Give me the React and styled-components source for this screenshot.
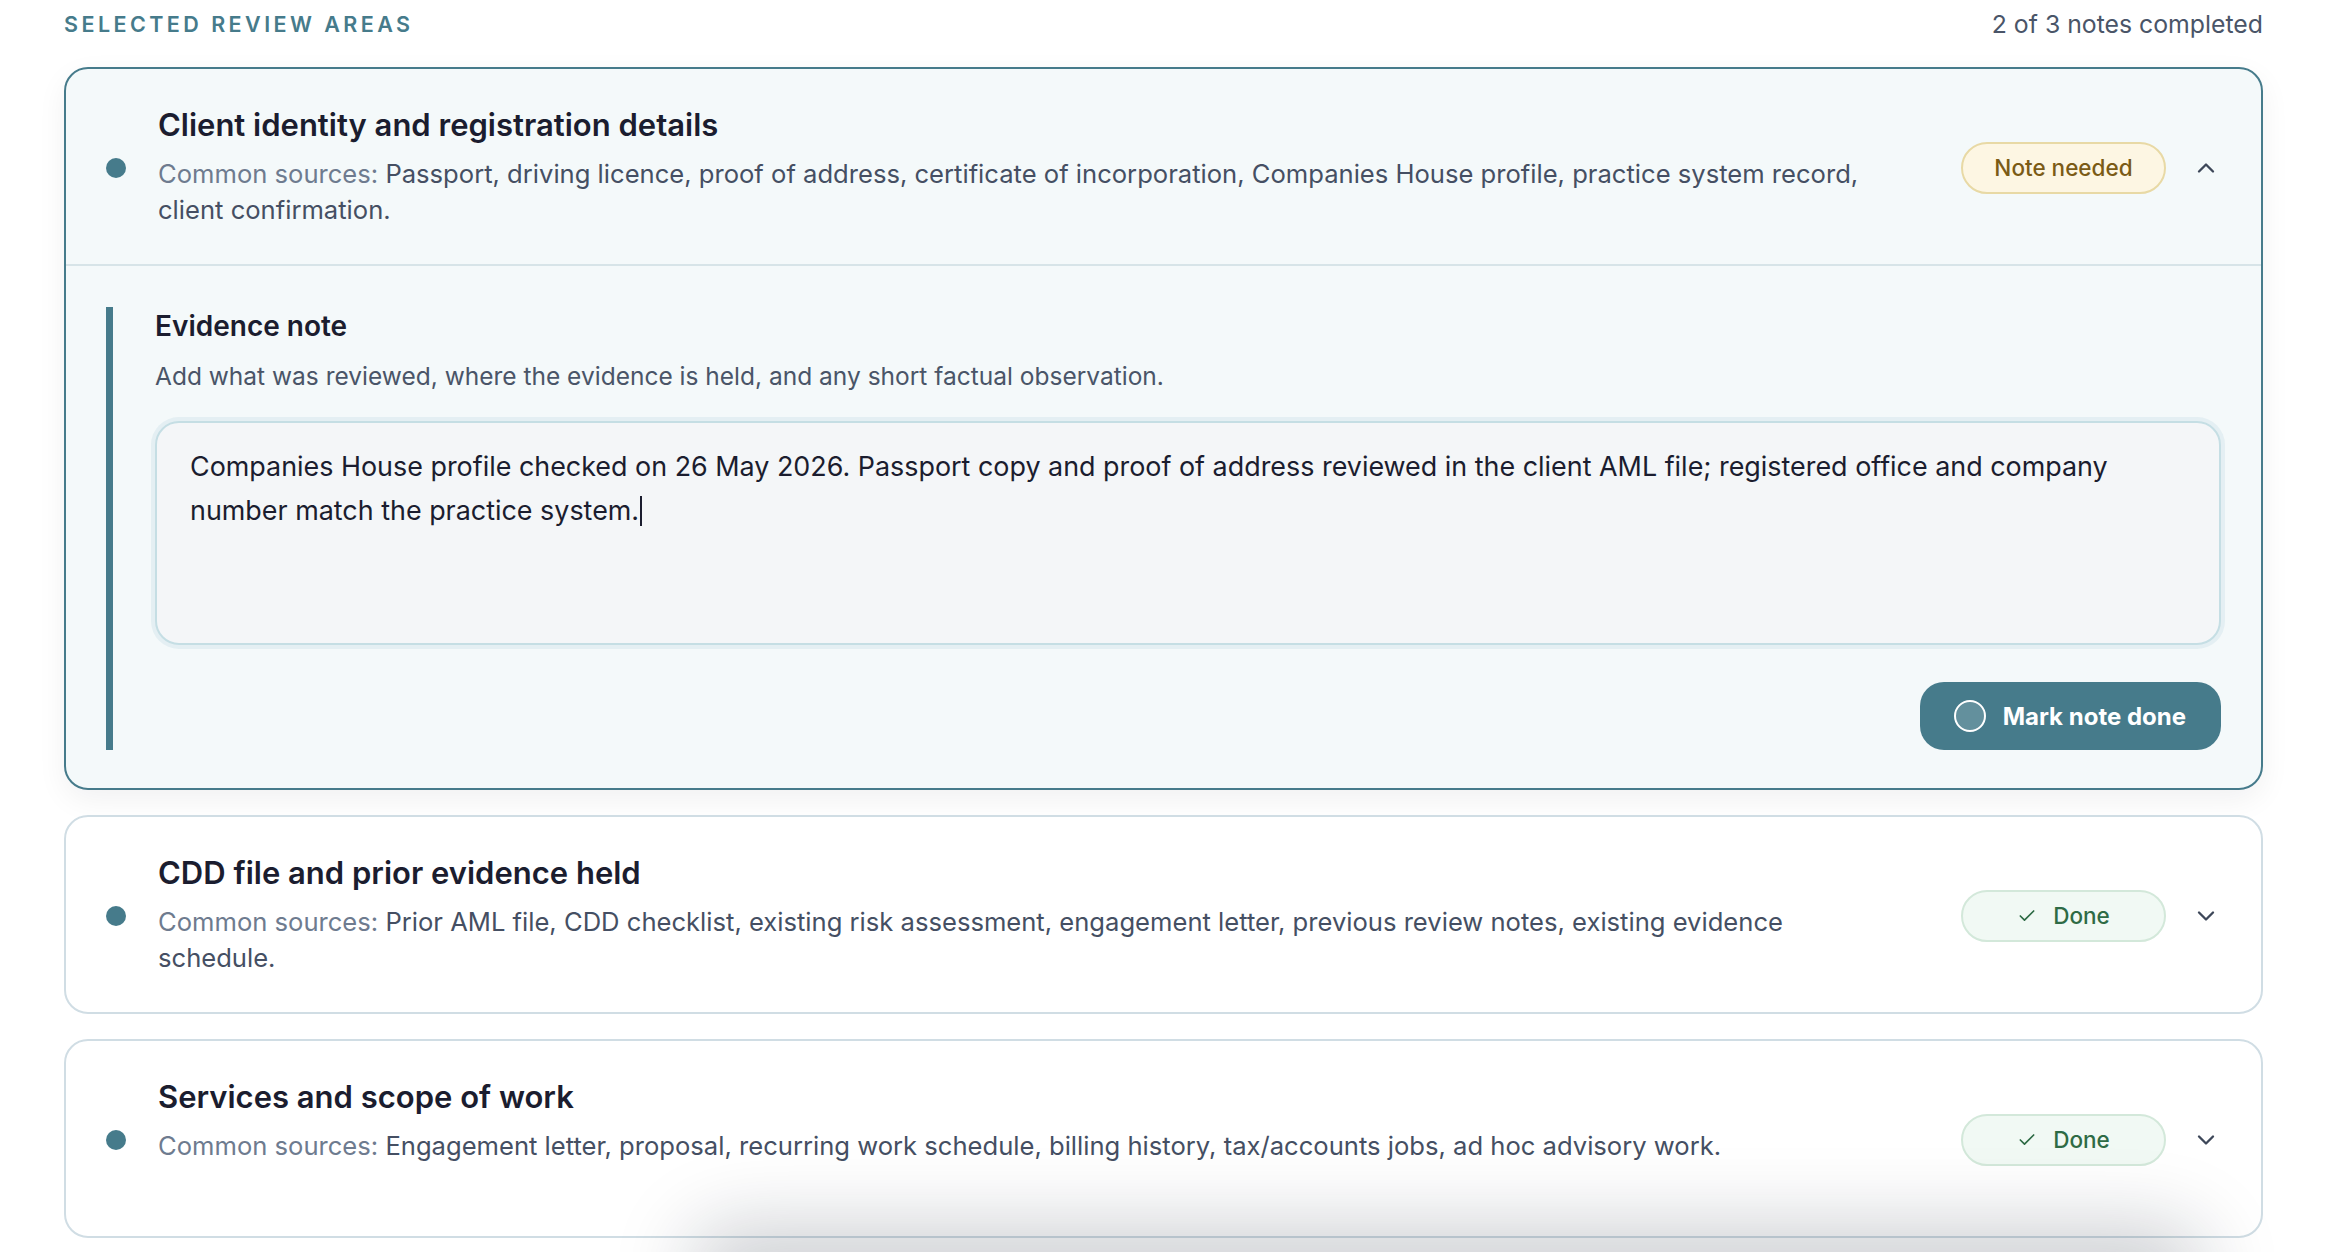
import styled, { createGlobalStyle } from 'styled-components'
import { ChevronDown, ChevronUp, Check } from 'lucide-react'

const TEAL = '#467b8b'

const GlobalStyle = createGlobalStyle`
    body {
        margin: 0;
        background: #fff;
        font-family: Inter, "Noto Sans", sans-serif;
        color: #1b1d2f;
    }
    * { box-sizing: border-box; }
`

const Page = styled.div`
    padding: 8px 71px 0 64px;
`
const Header = styled.div`
    display: flex;
    align-items: center;
    justify-content: space-between;
    height: 32px;
    margin-bottom: 27px;
`
const SectionLabel = styled.h2`
    margin: 0;
    font-size: 21.5px;
    font-weight: 600;
    letter-spacing: 0.16em;
    text-transform: uppercase;
    color: ${TEAL};
`
const Progress = styled.div`
    font-size: 24.8px;
    color: #4a5568;
`
const List = styled.div`
    display: flex;
    flex-direction: column;
    gap: 25px;
`
const Card = styled.section`
    border: 2px solid ${p => (p.$open ? TEAL : '#d0dde4')};
    border-radius: 24px;
    background: ${p => (p.$open ? '#f4f9fa' : '#fff')};
    box-shadow: ${p => (p.$open ? '0 10px 30px rgba(15, 23, 42, 0.06)' : 'none')};
    overflow: hidden;
`
const CardHeader = styled.div`
    display: grid;
    grid-template-columns: 20px 1fr 205px 28px;
    column-gap: 32px;
    align-items: center;
    min-height: 195px;
    padding: 36px 41px 34px 40px;
`
const Dot = styled.span`
    width: 20px;
    height: 20px;
    border-radius: 50%;
    background: ${TEAL};
`
const HeadText = styled.div`
    align-self: start;
    padding-right: 46px;
`
const Title = styled.h3`
    margin: 0 0 11px;
    font-size: 31px;
    line-height: 40px;
    font-weight: 600;
    color: #1b1d2f;
`
const Sources = styled.p`
    margin: 0;
    font-size: 25.6px;
    line-height: 36px;
    color: #454f63;
`
const SourcesLabel = styled.span`
    color: #6e7b8f;
`
const Badge = styled.span`
    display: flex;
    align-items: center;
    justify-content: center;
    gap: 16px;
    height: 52px;
    margin-left: 6px;
    margin-right: -6px;
    border-radius: 999px;
    border: 2px solid ${p => (p.$done ? '#d3e8da' : '#e8d9a5')};
    background: ${p => (p.$done ? '#f1f9f4' : '#fdf6e3')};
    color: ${p => (p.$done ? '#2e6b45' : '#7b5b16')};
    font-size: 22.5px;
    font-weight: 500;
`
const Toggle = styled.span`
    display: flex;
    justify-content: center;
    color: #3d4759;
`
const Body = styled.div`
    border-top: 2px solid #d7e4e8;
    padding: 41px 40px 38px;
`
const Evidence = styled.div`
    border-left: 7px solid ${TEAL};
    padding-left: 42px;
`
const EvidenceTitle = styled.h4`
    margin: 0;
    font-size: 28px;
    line-height: 38px;
    font-weight: 600;
    color: #1b1d2f;
`
const Helper = styled.p`
    margin: 14px 0 0;
    font-size: 24.5px;
    line-height: 34px;
    color: #4a5568;
`
const NoteField = styled.div`
    margin-top: 28px;
    height: 224px;
    padding: 22px 33px;
    border: 2px solid #c5dee4;
    border-radius: 24px;
    box-shadow: 0 0 0 4px rgba(197, 222, 228, 0.35);
    background: #f4f6f8;
    font-size: 26.9px;
    line-height: 43.5px;
    color: #1b1d2f;
`
const Caret = styled.span`
    display: inline-block;
    width: 2px;
    height: 30px;
    margin-left: 1px;
    vertical-align: -6px;
    background: #1b1d2f;
`
const Actions = styled.div`
    display: flex;
    justify-content: flex-end;
    margin-top: 37px;
`
const DoneButton = styled.button`
    display: flex;
    align-items: center;
    gap: 17px;
    height: 68px;
    padding: 0 35px 0 34px;
    border: none;
    border-radius: 24px;
    background: ${TEAL};
    color: #fff;
    font-family: inherit;
    font-size: 24px;
    font-weight: 700;
`
const Ring = styled.span`
    width: 32px;
    height: 32px;
    border-radius: 50%;
    border: 2px solid #fff;
    background: rgba(255, 255, 255, 0.16);
`
const DockShadow = styled.div`
    position: fixed;
    left: 690px;
    right: 130px;
    bottom: -90px;
    height: 90px;
    border-radius: 40px;
    background: #fff;
    box-shadow: 0 -24px 80px rgba(15, 23, 42, 0.22);
`

const areas = [
    {
        id: 1,
        title: 'Client identity and registration details',
        sources: 'Passport, driving licence, proof of address, certificate of incorporation, Companies House profile, practice system record, client confirmation.',
        done: false,
        open: true
    },
    {
        id: 2,
        title: 'CDD file and prior evidence held',
        sources: 'Prior AML file, CDD checklist, existing risk assessment, engagement letter, previous review notes, existing evidence schedule.',
        done: true
    },
    {
        id: 3,
        title: 'Services and scope of work',
        sources: 'Engagement letter, proposal, recurring work schedule, billing history, tax/accounts jobs, ad hoc advisory work.',
        done: true
    }
]

const ReviewArea = ({ area }) => {
    return (
        <Card $open={area.open}>
            <CardHeader>
                <Dot />
                <HeadText>
                    <Title>{area.title}</Title>
                    <Sources>
                        <SourcesLabel>Common sources:</SourcesLabel> {area.sources}
                    </Sources>
                </HeadText>
                {area.done ? (
                    <Badge $done>
                        <Check size={20} strokeWidth={2} />
                        Done
                    </Badge>
                ) : (
                    <Badge>Note needed</Badge>
                )}
                <Toggle>
                    {area.open ? <ChevronUp size={40} strokeWidth={2} /> : <ChevronDown size={40} strokeWidth={2} />}
                </Toggle>
            </CardHeader>
            {area.open && (
                <Body>
                    <Evidence>
                        <EvidenceTitle>Evidence note</EvidenceTitle>
                        <Helper>Add what was reviewed, where the evidence is held, and any short factual observation.</Helper>
                        <NoteField>
                            Companies House profile checked on 26 May 2026. Passport copy and proof of address reviewed in the client AML file; registered office and company number match the practice system.
                            <Caret />
                        </NoteField>
                        <Actions>
                            <DoneButton>
                                <Ring />
                                Mark note done
                            </DoneButton>
                        </Actions>
                    </Evidence>
                </Body>
            )}
        </Card>
    )
}

const App = () => {
    return (
        <Page>
            <GlobalStyle />
            <Header>
                <SectionLabel>Selected review areas</SectionLabel>
                <Progress>2 of 3 notes completed</Progress>
            </Header>
            <List>
                {areas.map(area => <ReviewArea key={area.id} area={area} />)}
            </List>
            <DockShadow />
        </Page>
    )
}
export default App
